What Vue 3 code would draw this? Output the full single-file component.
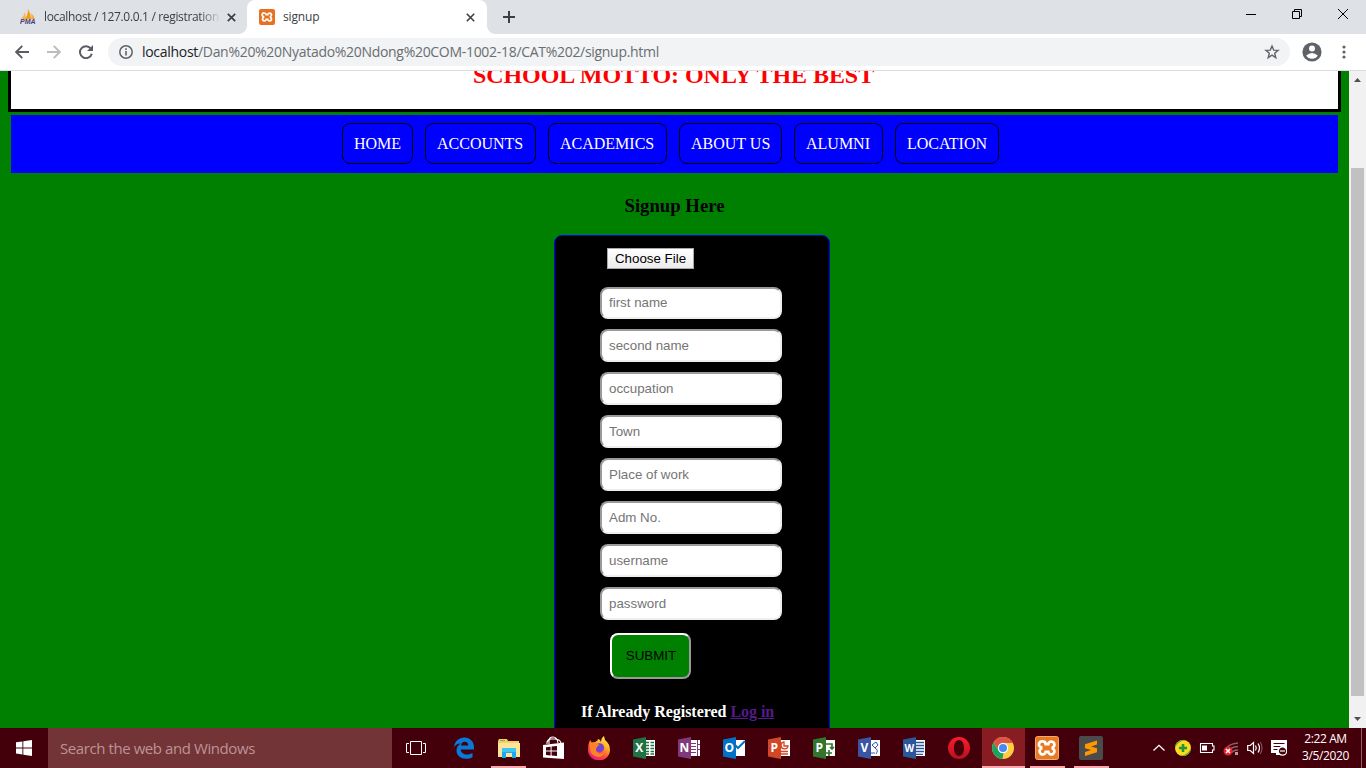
<script setup>
const links = [
  { label: 'HOME', width: 71 },
  { label: 'ACCOUNTS', width: 111 },
  { label: 'ACADEMICS', width: 119 },
  { label: 'ABOUT US', width: 103 },
  { label: 'ALUMNI', width: 89 },
  { label: 'LOCATION', width: 104 },
]
const fields = ['first name', 'second name', 'occupation', 'Town', 'Place of work', 'Adm No.', 'username', 'password']
const office = [
  { id: 'excel', letter: 'X', color: '#1f7244' },
  { id: 'onenote', letter: 'N', color: '#80397b' },
  { id: 'outlook', letter: 'O', color: '#0072c6' },
  { id: 'powerpoint', letter: 'P', color: '#d24726' },
  { id: 'project', letter: 'P', color: '#31752f' },
  { id: 'visio', letter: 'V', color: '#3955a3' },
  { id: 'word', letter: 'W', color: '#2b579a' },
]
</script>

<template>
  <div class="desktop">
    <div class="tabs">
      <div class="tab back">
        <svg class="favicon" width="16" height="16" viewBox="0 0 16 16">
          <path d="M1 10 Q4 7 5 3 L6 10Z" fill="#f7b64a" />
          <path d="M5 10 Q8 6 8 0 Q11 5 11 10Z" fill="#f89c0e" />
          <path d="M11 10 Q12 7 11 4 Q14 7 15 10Z" fill="#f7a83a" />
          <text x="0" y="15.3" font-size="6.6" font-weight="bold" font-style="italic" font-family="Liberation Sans, sans-serif" fill="#3f3f7f" textLength="15.5" lengthAdjust="spacingAndGlyphs">PMA</text>
        </svg>
        <span class="tab-title fade">localhost / 127.0.0.1 / registration</span>
        <svg class="close" width="9" height="9" viewBox="0 0 9 9"><path d="M.8.8 8.2 8.2M8.2.8.8 8.2" stroke="#3c4043" stroke-width="1.7" /></svg>
      </div>
      <div class="tab front">
        <svg class="favicon" width="16" height="16" viewBox="0 0 24 24">
          <rect width="24" height="24" rx="3" fill="#e8701e" />
          <path d="M8.2 6a2.8 2.8 0 0 0-1.5 5.4v1.2A2.8 2.8 0 1 0 10.8 15.5h2.4a2.8 2.8 0 1 0 4.1-2.9v-1.2A2.8 2.8 0 1 0 13.2 8.5h-2.4A2.8 2.8 0 0 0 8.2 6Z" fill="none" stroke="#fff" stroke-width="2.6" />
        </svg>
        <span class="tab-title">signup</span>
        <svg class="close" width="9" height="9" viewBox="0 0 9 9"><path d="M.8.8 8.2 8.2M8.2.8.8 8.2" stroke="#3c4043" stroke-width="1.6" /></svg>
      </div>
      <svg class="plus" width="12" height="12" viewBox="0 0 12 12"><path d="M6 0v12M0 6h12" stroke="#3c4043" stroke-width="2" /></svg>
      <div class="window-buttons">
        <svg width="10" height="10" viewBox="0 0 10 10"><path d="M0 5.5h10" stroke="#000" /></svg>
        <svg width="10" height="10" viewBox="0 0 10 10"><path d="M.5 2.5h7v7h-7zM2.5 2.500v-2h7v7h-2" fill="none" stroke="#000" /></svg>
        <svg width="10" height="10" viewBox="0 0 10 10"><path d="M0 0l10 10M10 0 0 10" stroke="#000" /></svg>
      </div>
    </div>

    <div class="toolbar">
      <svg width="14" height="14" viewBox="0 0 14 14"><path d="M14 7H1.5M7.3.8 1.2 7l6.1 6.2" fill="none" stroke="#5a5d61" stroke-width="1.9" /></svg>
      <svg class="forward-arrow" width="14" height="14" viewBox="0 0 14 14"><path d="M0 7h12.5M6.700.8 12.8 7l-6.1 6.2" fill="none" stroke="#babcbe" stroke-width="1.9" /></svg>
      <svg class="reload" width="14" height="14" viewBox="0 0 14 14"><path d="M12 3.8A6 6 0 1 0 12.8 8.7" fill="none" stroke="#5a5d61" stroke-width="2" /><path d="M14 0v6H8z" fill="#5a5d61" /></svg>
      <div class="address">
        <svg width="14" height="14" viewBox="0 0 14 14"><circle cx="7" cy="7" r="6.2" fill="none" stroke="#5f6368" stroke-width="1.5" /><path d="M7 6v4.500M7 3.300v1.700" stroke="#5f6368" stroke-width="1.6" /></svg>
        <span class="url"><b>localhost</b>/Dan%20%20Nyatado%20Ndong%20COM-1002-18/CAT%202/signup.html</span>
        <svg class="star" width="16" height="16" viewBox="0 0 16 16"><path d="M8 2 9.700 6.100 14.100 6.400 10.700 9.300 11.800 13.600 8 11.200 4.200 13.600 5.300 9.300 1.900 6.400 6.300 6.100Z" fill="none" stroke="#5f6368" stroke-width="1.4" /></svg>
      </div>
      <svg class="avatar" width="20" height="20" viewBox="0 0 20 20"><circle cx="10" cy="10" r="9.6" fill="#5f6368" /><circle cx="10" cy="6.6" r="3" fill="#fff" /><path d="M4.200 13.500Q7 10.900 10 10.900T15.800 13.500Q13.800 16.800 10 16.800T4.200 13.500Z" fill="#fff" /></svg>
      <svg class="more" width="4" height="14" viewBox="0 0 4 14"><g fill="#5f6368"><circle cx="2" cy="2" r="1.6" /><circle cx="2" cy="7" r="1.6" /><circle cx="2" cy="12" r="1.6" /></g></svg>
    </div>

    <div class="viewport">
      <main class="page">
        <header class="banner"><h2>SCHOOL MOTTO: ONLY THE BEST</h2></header>
        <nav class="menu">
          <a v-for="l in links" :key="l.label" :style="{ width: l.width + 'px' }">{{ l.label }}</a>
        </nav>
        <h3>Signup Here</h3>
        <form class="signup">
          <span class="file">Choose File</span>
          <div class="fields"><input v-for="f in fields" :key="f" :placeholder="f" /></div>
          <button type="button" class="submit">SUBMIT</button>
          <p class="login">If Already Registered <a>Log in</a></p>
        </form>
      </main>
      <div class="scrollbar">
        <svg width="7" height="4" viewBox="0 0 7 4"><path d="M0 4 3.500 0 7 4Z" fill="#505050" /></svg>
        <div class="thumb"></div>
        <svg class="down" width="7" height="4" viewBox="0 0 7 4"><path d="M0 0 3.500 4 7 0Z" fill="#505050" /></svg>
      </div>
    </div>

    <div class="taskbar">
      <div class="start">
        <svg width="16" height="16" viewBox="0 0 16 16"><path d="M0 2.300 6.400 1.400v6H0zM7.300 1.200 16 0v7.400H7.300zM0 8.400h6.400v6L0 13.600zM7.300 8.400H16V16l-8.700-1.200z" fill="#fff" /></svg>
      </div>
      <div class="search">Search the web and Windows</div>
      <div class="taskview">
        <svg width="20" height="14" viewBox="0 0 20 14"><path d="M4.500.5h11v13h-11zM3 2.500H.5v9H3M17 2.500h2.500v9H17" fill="none" stroke="#fff" /></svg>
      </div>
      <div class="apps">
        <div class="app">
          <svg width="24" height="24" viewBox="0 0 24 24"><path d="M2 11C3 5 7 1.500 12.300 1.500 18.500 1.500 22 6 22 11v2.500H8.700C9 17 12 18.500 15 18.500c2 0 4-.6 5.500-1.500v4.300c-2 1-4 1.500-6.300 1.500C8 22.800 4.500 19 4.500 14.500c0-3 1.700-5.700 4.300-7C5.500 7.700 3.500 9 2 11Zm7-1.500h7.300C16.300 7 15 5.700 12.800 5.700 10.700 5.700 9.300 7.300 9 9.500Z" fill="#0a78d7" fill-rule="evenodd" /></svg>
        </div>
        <div class="app open">
          <svg width="24" height="24" viewBox="0 0 24 24"><path d="M2 3h8l1 2h11v16H1V5z" fill="#f4cf67" /><path d="M1 7h22v14H1z" fill="#fde49a" /><path d="M3 4h5v1H3z" fill="#73b948" /><path d="M5 12h14v10h-4v-5H9v5H5z" fill="#1ba8ee" /><path d="M5 12h14v4H5z" fill="#3cc5f1" /></svg>
        </div>
        <div class="app">
          <svg width="24" height="24" viewBox="0 0 24 24"><path d="M7 8V5q0-4 4-4t5 6M5 8V6q1-3 4-3h3q6 0 7 4" fill="none" stroke="#fff" stroke-width="1.1" /><path d="M1 9 22 6.500V23L1 21.500z" fill="#fff" /><path d="M4 11.300 8.600 10.700v3.800H4zM9.600 10.600l5.400-.7v4.600H9.600zM4 15.600h4.600v3.800L4 18.900zM9.600 15.600H15v4.500l-5.400-.6z" fill="#43000a" /></svg>
        </div>
        <div class="app">
          <svg width="24" height="24" viewBox="0 0 24 24">
            <defs><linearGradient id="fox" x1=".8" y1="0" x2=".25" y2="1"><stop offset="0" stop-color="#fff44f" /><stop offset=".35" stop-color="#ffae25" /><stop offset=".65" stop-color="#ff5036" /><stop offset="1" stop-color="#e31587" /></linearGradient></defs>
            <path d="M3 4 5 7l3-1q3-1 3-3 2 0 3 3 0-4 3-6l1 4q5 4 5 10a11 10.500 0 0 1-22 0Q1 8 3 4Z" fill="url(#fox)" /><circle cx="12.5" cy="11.8" r="4.6" fill="#7542d1" /><path d="M3 7q4-2 7 1l3 1q-3 1-3 2-2 3 0 5 3 3 8 0-2 5-7 5-8-1-8-9Z" fill="#ff8129" />
          </svg>
        </div>
        <div v-for="o in office" :key="o.id" class="app">
          <svg width="24" height="24" viewBox="0 0 24 24">
            <path d="M11 4h12v16H11z" fill="#fff" />
            <g :stroke="o.color" fill="none">
              <path v-if="o.id === 'excel'" d="M14 6.500h3m1.500 0h3.500M14 9.500h3m1.500 0h3.500M14 12.500h3m1.500 0h3.500M14 15.500h3m1.500 0h3.500M14 18h3m1.500 0h3.500" stroke-width="1.5" />
              <path v-else-if="o.id === 'onenote'" d="M14 7.500h5M14 10.500h5M14 13.500h5M14 16.500h5M20.500 4v16M20 8.500h3M20 13.500h3" />
              <path v-else-if="o.id === 'outlook'" d="M11 7l5 5 7-7" stroke-width="2" />
              <path v-else-if="o.id === 'powerpoint'" d="M17 6a3.500 3.500 0 1 0 4 4h-4zM14 15.500h7M14 18h7" stroke-width="1.3" />
              <path v-else-if="o.id === 'project'" d="M13 8h7v5M18 11l2 2 2-2M14 17h6M17 14v6" stroke-width="1.7" />
              <path v-else-if="o.id === 'visio'" d="M15 9l4-3 2 3-3 3-3-3M18 12q4 2 1 6M14 17h4" />
              <path v-else d="M14 6.500h8M14 9.500h8M14 12.500h8M14 15.500h8M14 18.300h7" stroke-width="1.3" />
            </g>
            <path d="M1 3.500 14 1v22L1 20.500z" :fill="o.color" />
            <text x="7.3" y="16.3" text-anchor="middle" font-family="Open Sans, sans-serif" font-weight="bold" :font-size="o.letter === 'W' ? 10 : 12" fill="#fff">{{ o.letter }}</text>
          </svg>
        </div>
        <div class="app">
          <svg width="24" height="24" viewBox="0 0 24 24"><defs><linearGradient id="opera" x2="0" y2="1"><stop stop-color="#ff1b2d" /><stop offset="1" stop-color="#b5121c" /></linearGradient></defs><path d="M12 1a11 11 0 1 0 0 22 11 11 0 1 0 0-22Zm0 3c3 0 5 3.500 5 8s-2 8-5 8-5-3.500-5-8 2-8 5-8Z" fill="url(#opera)" fill-rule="evenodd" /></svg>
        </div>
        <div class="app chrome">
          <svg width="24" height="24" viewBox="0 0 24 24"><circle cx="12" cy="12" r="11" fill="#ffcd42" /><path d="M2.500 6.500A11 11 0 0 1 21.700 7H12L7.500 14.500Z" fill="#de5347" /><path d="M2.500 6.500 7.700 14.800Q9.500 17.500 12.500 17L11.500 23A11 11 0 0 1 2.500 6.500Z" fill="#1da261" /><circle cx="12" cy="12" r="5.2" fill="#fff" /><circle cx="12" cy="12" r="4" fill="#4a89f3" /></svg>
        </div>
        <div class="app open tail">
          <svg width="24" height="24" viewBox="0 0 24 24"><rect x=".5" y=".5" width="23" height="23" rx="2" fill="#e87a24" stroke="#f5a869" /><path d="M8.200 6a2.800 2.800 0 0 0-1.500 5.400v1.200A2.800 2.800 0 1 0 10.800 15.500h2.400a2.800 2.800 0 1 0 4.100-2.900v-1.200A2.800 2.800 0 1 0 13.200 8.500h-2.400A2.800 2.800 0 0 0 8.200 6Z" fill="none" stroke="#fff" stroke-width="2.5" transform="translate(-1.200 -1.200) scale(1.100)" /></svg>
        </div>
        <div class="app open tail">
          <svg width="24" height="24" viewBox="0 0 24 24"><rect width="24" height="24" rx="2" fill="#4b4b4b" /><path d="M18 4.500v4l-6 2 6 1.700v4L6 20v-4l6-2-6-1.800v-4z" fill="#ff9800" /></svg>
        </div>
      </div>
      <div class="tray">
        <svg width="15" height="20" viewBox="0 0 15 20"><path d="M1.500 12.500 7 7.300l5.500 5.200" fill="none" stroke="#fff" stroke-width="1.3" /></svg>
        <svg width="16" height="20" viewBox="0 0 16 20"><circle cx="8" cy="10" r="8" fill="#ffd91e" /><path d="M0 10A8 8 0 0 1 10 2.300Q3 3 0 10ZM16 10A8 8 0 0 1 6 17.700Q13 17 16 10Z" fill="#44ae45" /><path d="M8 6v8M4 10h8" stroke="#23943b" stroke-width="2.6" /></svg>
        <svg width="16" height="20" viewBox="0 0 16 20"><path d="M1.500 5.500h12v2.500h1.500v4H13.500v2.500h-12z" fill="none" stroke="#fff" stroke-width="1.1" /><path d="M3 7.500h5v5H3z" fill="#fff" /></svg>
        <svg width="16" height="20" viewBox="0 0 16 20"><g fill="none" stroke="#8d6267" stroke-width="1.4"><path d="M2 13Q4 6 15 5M5 14Q7 9 15 8.500M8.500 15Q10 12 15 12" /></g><path d="M12 14h3v3h-3z" fill="#b99a9e" /><circle cx="5" cy="13" r="4.5" fill="#e3242e" /><path d="M3 11l4 4m0-4-4 4" stroke="#fff" stroke-width="1.5" /></svg>
        <svg width="16" height="20" viewBox="0 0 16 20"><path d="M.7 7.500h2.500L6.500 4.500v11l-3.300-3H.7zM8.500 7.500q1.500 2.500 0 5M11 5.500q3 4.500 0 9" fill="none" stroke="#fff" stroke-width="1.2" /><path d="M13.300 4q3.500 6 0 12" fill="none" stroke="#8e6065" /></svg>
        <svg width="16" height="20" viewBox="0 0 16 20"><path d="M0 2h16v12h-4v3H5v-2H0z" fill="#fff" /><path d="M2.500 5.500h11M2.500 8.500h7M2.500 11.500h4" stroke="#43000a" /><circle cx="11.5" cy="13" r="4.2" fill="#43000a" stroke="#fff" stroke-width="1.2" /><path d="M9 13h5" stroke="#fff" stroke-width="1.2" /></svg>
      </div>
      <div class="clock"><span>2:22 AM</span><span>3/5/2020</span></div>
      <div class="peek"></div>
    </div>
  </div>
</template>

<style>
body { overflow: hidden; }
</style>

<style scoped>
.desktop { width: 1366px; height: 768px; display: flex; flex-direction: column; overflow: hidden; font-family: "Open Sans", "Noto Sans", sans-serif; }
.desktop * { box-sizing: border-box; }
svg { display: block; flex: none; }

.tabs { height: 34px; background: #dee1e6; display: flex; flex: none; }
.tab { display: flex; align-items: center; height: 34px; white-space: nowrap; font-size: 12px; color: #3c4043; }
.back { width: 247px; padding-left: 20px; background: #dee1e6; }
.front { width: 240px; padding-left: 12px; background: #fff; border-radius: 8px 8px 0 0; position: relative; }
.front::before, .front::after { content: ""; position: absolute; bottom: 0; width: 8px; height: 8px; }
.front::before { left: -8px; background: radial-gradient(circle at 0 0, transparent 7.5px, #fff 8px); }
.front::after { right: -8px; background: radial-gradient(circle at 100% 0, transparent 7.5px, #fff 8px); }
.tab-title { margin-left: 8px; width: 176px; overflow: hidden; line-height: 18px; letter-spacing: -0.33px; }
.front .tab-title { letter-spacing: -0.15px; }
.fade { -webkit-mask-image: linear-gradient(90deg, #000 155px, transparent 177px); mask-image: linear-gradient(90deg, #000 155px, transparent 177px); }
.close { margin-left: 7px; }
.plus { margin: 11px 0 0 16px; }
.window-buttons { margin: 9px 18px 0 auto; display: flex; gap: 36px; }

.toolbar { height: 37px; flex: none; background: #fff; border-bottom: 1px solid #dadce0; display: flex; align-items: center; padding-left: 15px; }
.forward-arrow { margin-left: 18px; }
.reload { margin-left: 18px; }
.address { margin-left: 15px; width: 1182px; height: 28px; border-radius: 14px; background: #f1f3f4; display: flex; align-items: center; padding: 0 10px 0 11px; }
.url { margin-left: 9px; font-size: 14px; color: #6a6d71; white-space: nowrap; line-height: 20px; letter-spacing: -0.3px; }
.url b { font-weight: normal; color: #202124; }
.star { margin-left: auto; }
.avatar { margin-left: 12px; }
.more { margin-left: 20px; }

.viewport { height: 657px; flex: none; display: flex; overflow: hidden; }
.page { width: 1349px; background: #008000; overflow: hidden; font-family: "Liberation Serif", serif; padding: 0 8px; }
.banner { height: 41px; background: #fff; border: 3px solid #000; border-top: 0; overflow: hidden; }
.banner h2 { margin: -9px 2px 0 0; font-size: 24px; line-height: 27px; letter-spacing: -0.06px; color: #f00; text-align: center; white-space: nowrap; }
.menu { margin: 3px 3px 0; height: 58px; background: #00f; display: flex; gap: 12px; padding: 8px 0 0 331px; }
.menu a { height: 41px; border: 1px solid #000; border-radius: 8px; color: #fff; font-size: 16px; line-height: 39px; padding-left: 11px; white-space: nowrap; }
h3 { margin: 22px 0 0; font-size: 18.72px; line-height: 22px; text-align: center; color: #000; }
.signup { margin: 18px 0 0 546px; width: 276px; height: 560px; background: #000; border: 1px solid #00f; border-radius: 8px; padding-top: 12px; display: flex; flex-direction: column; align-items: flex-start; font-family: "Liberation Sans", Arial, sans-serif; }
.file { margin-left: 52px; width: 87px; height: 21px; border: 1px solid #a9a9a9; background: linear-gradient(#fff, #ececec); color: #000; font-size: 13.333px; line-height: 19px; text-align: center; }
.fields { margin: 18px 0 0 45px; display: flex; flex-direction: column; gap: 10px; }
.fields input { width: 182px; height: 33px; margin: 0; padding: 1px 7px; border: 2px solid; border-color: #9a9a9a #eee #eee #9a9a9a; border-radius: 8px; background: #fff; font: 13.333px "Liberation Sans", Arial, sans-serif; }
.fields input:first-child { height: 32px; padding: 0 7px 2px; }
.fields input::placeholder { color: #757575; opacity: 1; }
.submit { margin: 13px 0 0 55px; width: 81px; height: 46px; padding: 0 0 2px 1px; border: 2px solid; border-color: #fff #9a9a9a #9a9a9a #fff; border-radius: 8px; background: #008000; color: #000; font: 13.333px "Liberation Sans", Arial, sans-serif; }
.login { margin: 24px 0 0 26px; color: #fff; font: bold 16px/18px "Liberation Serif", serif; letter-spacing: -0.03px; white-space: nowrap; }
.login a { color: #551a8b; text-decoration: underline; }

.scrollbar { width: 17px; background: #f1f1f1; display: flex; flex-direction: column; align-items: center; padding: 7px 0; }
.thumb { width: 13px; height: 528px; margin-top: 86px; background: #c1c1c1; }
.down { margin-top: auto; }

.taskbar { height: 40px; flex: none; background: #43000a; display: flex; }
.start, .taskview { width: 48px; display: flex; align-items: center; justify-content: center; }
.search { width: 344px; background: #723437; color: #bd9396; font-size: 15px; line-height: 40px; padding-left: 12px; letter-spacing: -0.42px; white-space: nowrap; }
.apps { display: flex; margin-left: 1px; }
.app { width: 45px; display: flex; align-items: center; justify-content: center; position: relative; }
.chrome { width: 43px; margin-left: 1px; background: #871c23; border-bottom: 2px solid #f7a8ae; padding: 2px 1px 0 0; }
.tail { width: 44px; }
.open::after { content: ""; position: absolute; bottom: 0; left: 5px; width: 35px; height: 2px; background: #f7a8ae; }
.tray { margin-left: 39px; display: flex; align-items: center; gap: 8px; }
.clock { margin-left: 12px; width: 53px; color: #fff; font-size: 12px; line-height: 17px; padding-top: 2px; display: flex; flex-direction: column; align-items: center; letter-spacing: -0.4px; white-space: nowrap; }
.peek { margin-left: 9px; width: 1px; background: #8c6268; }
</style>
